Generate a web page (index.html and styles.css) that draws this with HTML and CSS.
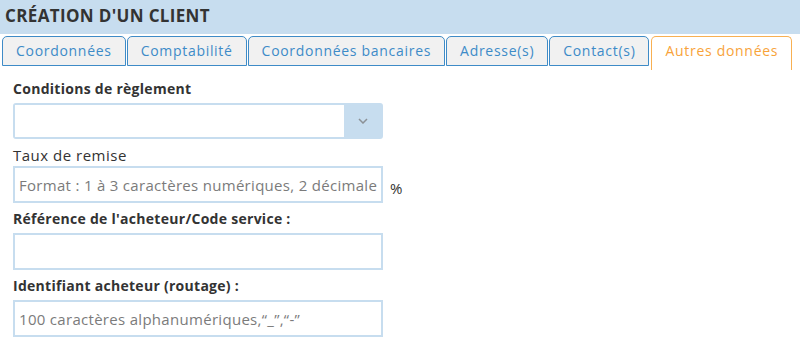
FILE: index.html
```html
<!DOCTYPE html>
<html lang="fr">
<head>
    <meta charset="UTF-8">
    <title>Création d'un client</title>
    <link rel="stylesheet" href="styles.css">
</head>
<body>

<div class="panel">
    <div class="panel-title">CRÉATION D'UN CLIENT</div>

    <!-- Onglets -->
    <ul class="tabs">
        <li class="tab">Coordonnées</li>
        <li class="tab">Comptabilité</li>
        <li class="tab">Coordonnées bancaires</li>
        <li class="tab">Adresse(s)</li>
        <li class="tab">Contact(s)</li>
        <li class="tab active">Autres données</li>
    </ul>

    <form class="form">
        <div class="field">
            <label class="label strong">Conditions de règlement</label>
            <div class="select">
                <div class="select-value"></div>
                <div class="select-arrow">
                    <svg width="10" height="6" viewBox="0 0 10 6"><path d="M1 1 L5 5 L9 1" fill="none" stroke="#8c9196" stroke-width="1.5"/></svg>
                </div>
            </div>
        </div>

        <div class="field">
            <label class="label light">Taux de remise</label>
            <div class="row">
                <input class="input" type="text" placeholder="Format : 1 à 3 caractères numériques, 2 décimales">
                <span class="unit">%</span>
            </div>
        </div>

        <div class="field">
            <label class="label strong">Référence de l'acheteur/Code service :</label>
            <input class="input" type="text">
        </div>

        <div class="field">
            <label class="label strong">Identifiant acheteur (routage) :</label>
            <input class="input" type="text" placeholder="100 caractères alphanumériques,“_”,“-”">
        </div>
    </form>
</div>

</body>
</html>
```

FILE: styles.css
```css
* {
    box-sizing: border-box;
}

body {
    margin: 0;
    background-color: #fff;
    font-family: "Open Sans", "Liberation Sans", sans-serif;
    color: #333;
}

.panel-title {
    height: 34px;
    background-color: #c7ddef;
    padding: 4px 5px 0;
    font-size: 17px;
    line-height: 23px;
    font-weight: bold;
    letter-spacing: 0.35px;
    color: #333;
}

.tabs {
    list-style: none;
    margin: 0;
    padding: 2px 0 0 2px;
    display: flex;
    align-items: flex-start;
    gap: 1px;
    height: 36px;
}

.tab {
    height: 30px;
    padding: 4px 13px 0 13px;
    border: 1px solid #3e8bc7;
    border-radius: 5px 5px 0 0;
    background-color: #f1f1f1;
    color: #3d8bc8;
    font-size: 14px;
    line-height: 20px;
    letter-spacing: 0.7px;
}

.tab.active {
    height: 34px;
    margin-left: 1px;
    border-bottom: none;
    background-color: #fff;
    border-color: #f8b052;
    color: #f8a33a;
}

.form {
    padding: 9px 13px 0;
}

.field {
    margin-bottom: 6px;
}

.label {
    display: block;
    font-size: 14px;
    line-height: 20px;
    margin-bottom: 4px;
    color: #333;
}

.label.strong {
    font-weight: bold;
    letter-spacing: 0.28px;
}

.label.light {
    font-size: 15px;
    letter-spacing: 0.5px;
    margin-bottom: 1px;
}

.select {
    display: flex;
    width: 370px;
    height: 36px;
    border: 2px solid #c7ddef;
    border-radius: 3px;
}

.select-value {
    flex: 1;
    background-color: #fff;
}

.select-arrow {
    width: 37px;
    background-color: #c7ddef;
    display: flex;
    justify-content: center;
    align-items: center;
}

.row {
    display: flex;
    align-items: flex-end;
    gap: 7px;
}

.input {
    display: block;
    width: 370px;
    height: 37px;
    border: 2px solid #c7ddef;
    padding: 0 4px;
    font-family: "Open Sans", "Liberation Sans", sans-serif;
    font-size: 15px;
    letter-spacing: 0.3px;
    color: #333;
    outline: none;
}

.input::placeholder {
    color: #7b7b7b;
}

.unit {
    font-size: 15px;
    line-height: 20px;
    padding-bottom: 5px;
}
```
